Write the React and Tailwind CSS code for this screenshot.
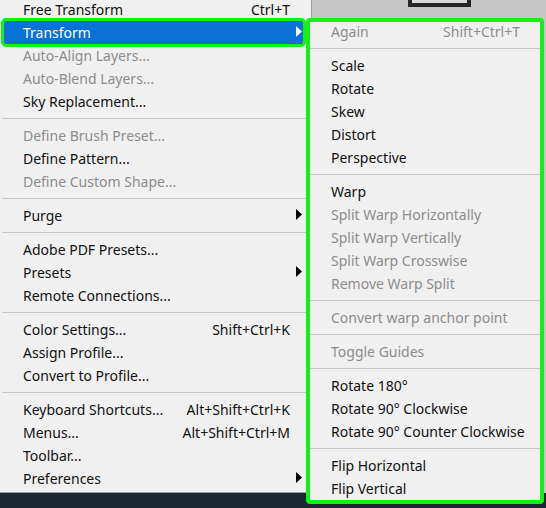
import React from 'react';

const mainItems = [
  { label: 'Free Transform', shortcut: 'Ctrl+T' },
  { label: 'Transform', active: true, sub: true },
  { label: 'Auto-Align Layers...', disabled: true },
  { label: 'Auto-Blend Layers...', disabled: true },
  { label: 'Sky Replacement...' },
  'sep',
  { label: 'Define Brush Preset...', disabled: true },
  { label: 'Define Pattern...' },
  { label: 'Define Custom Shape...', disabled: true },
  'sep',
  { label: 'Purge', sub: true },
  'sep',
  { label: 'Adobe PDF Presets...' },
  { label: 'Presets', sub: true },
  { label: 'Remote Connections...' },
  'sep',
  { label: 'Color Settings...', shortcut: 'Shift+Ctrl+K' },
  { label: 'Assign Profile...' },
  { label: 'Convert to Profile...' },
  'sep',
  { label: 'Keyboard Shortcuts...', shortcut: 'Alt+Shift+Ctrl+K' },
  { label: 'Menus...', shortcut: 'Alt+Shift+Ctrl+M' },
  { label: 'Toolbar...' },
  { label: 'Preferences', sub: true },
];

const subItems = [
  { label: 'Again', shortcut: 'Shift+Ctrl+T', disabled: true },
  'sep',
  { label: 'Scale' },
  { label: 'Rotate' },
  { label: 'Skew' },
  { label: 'Distort' },
  { label: 'Perspective' },
  'sep',
  { label: 'Warp' },
  { label: 'Split Warp Horizontally', disabled: true },
  { label: 'Split Warp Vertically', disabled: true },
  { label: 'Split Warp Crosswise', disabled: true },
  { label: 'Remove Warp Split', disabled: true },
  'sep',
  { label: 'Convert warp anchor point', disabled: true },
  'sep',
  { label: 'Toggle Guides', disabled: true },
  'sep',
  { label: 'Rotate 180°' },
  { label: 'Rotate 90° Clockwise' },
  { label: 'Rotate 90° Counter Clockwise' },
  'sep',
  { label: 'Flip Horizontal' },
  { label: 'Flip Vertical' },
];

const Arrow = ({ white }) => (
  <svg width="6" height="11" viewBox="0 0 6 11" className="absolute right-[1px] top-[5px]">
    <path d="M0 0 L6 5.5 L0 11 Z" fill={white ? '#ffffff' : '#000000'} />
  </svg>
);

const MainRow = ({ item }) => (
  <div
    className={`relative h-[23px] ml-[4px] mr-[8px] pl-[19px] pr-[13px] flex items-center justify-between whitespace-nowrap ${
      item.active ? 'bg-[#0a72d6] text-white' : item.disabled ? 'text-[#8d8d8d]' : 'text-[#111111]'
    }`}
  >
    <span>{item.label}</span>
    {item.shortcut && <span>{item.shortcut}</span>}
    {item.sub && <Arrow white={item.active} />}
    {item.active && (
      <span className="absolute -inset-[3px] border-[3px] border-[#14f014] rounded-[5px]" />
    )}
  </div>
);

const SubRow = ({ item }) => (
  <div
    className={`h-[23px] pl-[21px] pr-[20px] flex items-center justify-between whitespace-nowrap ${
      item.disabled ? 'text-[#8d8d8d]' : 'text-[#111111]'
    }`}
  >
    <span>{item.label}</span>
    {item.shortcut && <span>{item.shortcut}</span>}
  </div>
);

export default function App() {
  return (
    <div className="relative w-[546px] h-[508px] overflow-hidden bg-[#c6c6c6] font-['Noto_Sans',sans-serif] text-[14px] leading-none">
      <div className="flex flex-col h-full">
        <div className="flex h-[493px]">
          {/* Edit menu */}
          <div className="w-[312px] h-full bg-[#f0f0f0] border-r border-b border-[#9e9e9e] flex flex-col">
            <div className="-mt-[2px] flex flex-col">
              {mainItems.map((item, i) =>
                item === 'sep' ? (
                  <div key={i} className="h-[11px] flex items-center ml-[2px]">
                    <div className="h-px w-full bg-[#c8c8c8]" />
                  </div>
                ) : (
                  <MainRow key={i} item={item} />
                )
              )}
            </div>
          </div>
          {/* canvas behind */}
          <div className="flex-1 relative">
            <div className="absolute left-[96px] -top-[40px] w-[63px] h-[47px] border-[4px] border-[#262626] bg-[#d9d9d9]" />
          </div>
        </div>
        <div className="flex-1 bg-[#1b2731]" />
      </div>

      {/* Transform submenu */}
      <div className="absolute left-[306px] top-[18px] w-[238px] h-[486px] border-[4px] border-[#14f014] rounded-[4px] bg-[#f0f0f0] overflow-hidden">
        <div className="-mt-[2px] flex flex-col">
          {subItems.map((item, i) =>
            item === 'sep' ? (
              <div key={i} className="h-[11px] flex items-center">
                <div className="h-px w-full bg-[#c8c8c8]" />
              </div>
            ) : (
              <SubRow key={i} item={item} />
            )
          )}
        </div>
      </div>
    </div>
  );
}
